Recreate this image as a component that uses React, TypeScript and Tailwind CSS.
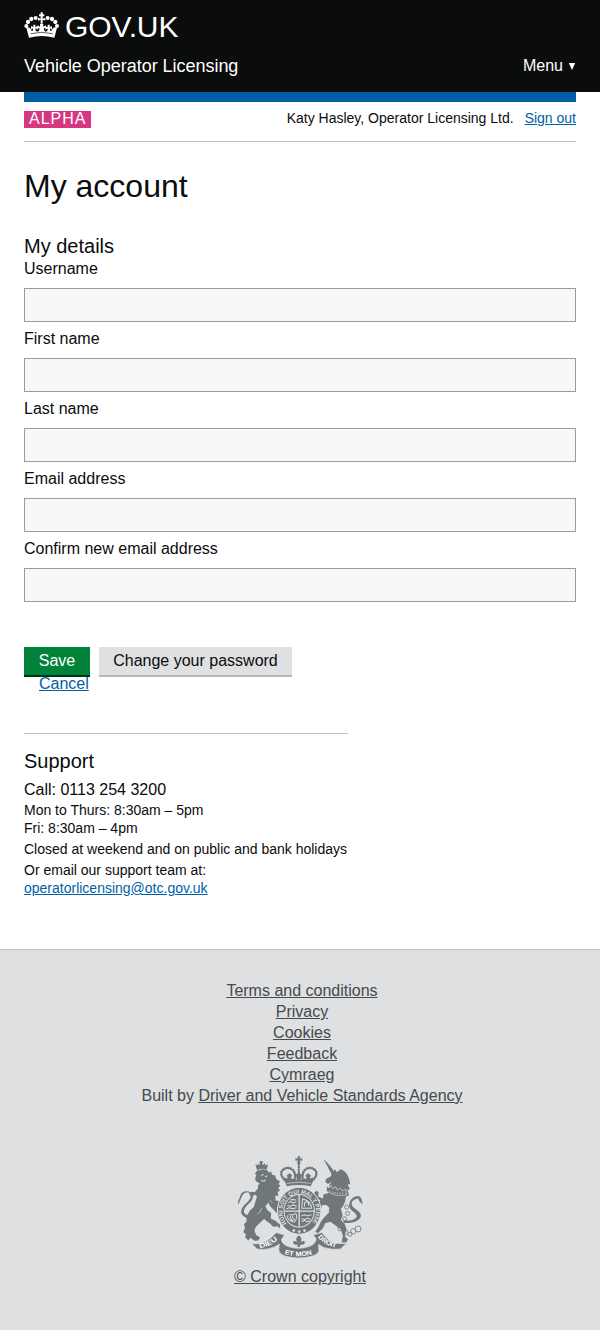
import React from "react";

const fields = ["Username", "First name", "Last name", "Email address", "Confirm new email address"];
const footerLinks = ["Terms and conditions", "Privacy", "Cookies", "Feedback", "Cymraeg"];

function Crown() {
  return (
    <svg className="block h-[27px] w-[36px]" viewBox="0 0 108 81" fill="#fff">
      <path d="M15 80 L7 50 Q17 46 22 59 L27 59 L27 52 L21 56 L21 45 L28 48 L28 41 L34 41 L34 48 L41 45 L41 56 L34 52 L35 60 L42 62 Q48 58 46 50 L40 54 L40 43 L48 47 L48 39 L58 39 L58 47 L66 43 L66 54 L60 50 Q58 58 64 62 L70 60 L71 52 L64 56 L64 45 L71 48 L71 41 L77 41 L77 48 L84 45 L84 56 L78 52 L78 59 L83 59 Q88 46 99 50 L91 80 Q53 70 15 80Z" />
      <path d="M50 38 L50 26 L42 29 L42 20 L50 23 L50 16 L45 16 L45 10 L50 10 L50 4 L56 4 L56 10 L61 10 L61 16 L56 16 L56 23 L64 20 L64 29 L56 26 L56 38Z" />
      <circle cx="35" cy="21" r="6" /><circle cx="22" cy="24" r="6.5" /><circle cx="12" cy="33" r="6.5" /><circle cx="7" cy="45" r="6" />
      <circle cx="71" cy="21" r="6" /><circle cx="84" cy="24" r="6.5" /><circle cx="94" cy="33" r="6.5" /><circle cx="99" cy="45" r="6" />
      <path d="M20 68 Q53 60 86 68" stroke="#0b0c0c" strokeWidth="2" fill="none" />
    </svg>
  );
}

function Crest() {
  return (
    <svg className="block h-[102px] w-[125px]" viewBox="25 16 374 309" preserveAspectRatio="none" fill="#6f777b">
      <defs>
        <path id="motto" d="M171 220 A50 54 0 1 1 245 220" />
        <path id="dieu" d="M90 294 Q124 292 150 263" />
        <path id="droit" d="M264 262 Q288 292 326 294" />
        <path id="mon" d="M164 313 Q206 326 250 313" />
      </defs>
      <path d="M203 17 L211 17 L210 24 L217 22 L217 31 L210 29 L212 38 Q207 44 202 38 L204 29 L197 31 L197 22 L204 24Z" />
      <g fill="none" stroke="#6f777b" strokeLinecap="round">
        <path d="M168 92 Q147 72 158 59 Q170 48 183 54 Q200 63 195 90 M246 92 Q267 72 256 59 Q244 48 231 54 Q214 63 219 90" strokeWidth="3" />
        <path d="M168 92 Q147 72 158 59 Q170 48 183 54 Q200 63 195 90 M246 92 Q267 72 256 59 Q244 48 231 54 Q214 63 219 90" strokeDasharray="0.1 8" strokeWidth="8" />
        <path d="M207 43 L207 88" strokeDasharray="0.1 7" strokeWidth="7" />
      </g>
      <path d="M165 92 L163 80 L174 85 L171 74 L180 68 L187 74 L183 85 L192 84 L202 88 L198 73 L207 66 L216 73 L212 88 L222 84 L231 85 L227 74 L234 68 L243 74 L240 85 L251 80 L249 92 L243 108 Q207 100 171 108Z" />
      <path d="M171 99 Q207 91 243 99" stroke="#dee0e2" fill="none" strokeWidth="2" />

      <path d="M77 41 L86 45 L84 38 L91 43 L91 36 L87 35 L92 31 L96 31 L101 35 L97 38 L99 43 L106 37 L106 45 L115 41 L111 57 Q96 52 82 59Z" />
      <path d="M80 62 Q95 53 111 58 L118 66 L125 63 L126 72 L137 76 L139 86 L151 93 L146 101 L152 107 L145 112 L151 121 L143 124 L146 137 L137 136 L137 151 L152 153 L160 147 L161 156 L153 166 L145 166 L141 176 L148 183 L141 189 L124 171 L115 158 L107 168 L113 180 L124 189 L123 205 L137 212 L151 224 L151 236 L143 229 L130 230 L122 222 L115 217 L103 207 L94 215 L80 229 L74 240 L79 255 L91 263 L86 272 L74 273 L62 264 L56 272 L46 262 L49 254 L41 246 L46 234 L43 223 L51 214 L50 200 L61 180 L72 171 L78 151 L82 139 L76 133 L69 138 L59 134 L61 127 L68 124 L75 126 L85 114 L85 103 L92 101 L78 92 L76 83 L80 76 L76 69Z" />
      <path d="M94 76 L102 71 M94 89 Q103 96 108 88 M106 79 L113 76" fill="none" stroke="#dee0e2" strokeWidth="3" />
      <path d="M96 174 Q91 187 83 193 M128 158 L120 150" fill="none" stroke="#dee0e2" strokeWidth="2" />
      <path d="M58 205 Q34 200 34 184 Q35 171 53 156 Q72 137 55 126 Q41 124 34 145 L26 164 L25 154 L29 145 Q34 122 49 123 Q68 123 70 139 Q69 151 54 164 Q40 178 43 187 Q47 196 63 196Z" />

      <path d="M280 25 Q301 43 317 70 L306 74 Q295 49 280 25Z" />
      <path d="M307 70 L315 56 L321 65 L332 56 Q350 62 357 84 L361 101 L353 103 L360 116 L353 119 L357 136 L348 139 L345 155 L339 168 L333 176 L338 195 L333 210 L344 221 L350 239 L344 259 L354 268 L349 278 L335 278 L339 257 L333 239 L318 227 L301 215 L286 220 L279 235 L265 249 L256 246 L265 232 L273 215 L281 204 L297 187 L298 173 L289 164 L276 165 L272 181 L263 174 L263 158 L272 151 L261 143 L252 128 L260 121 L266 126 L265 139 L279 145 L281 132 L294 129 L302 118 L298 104 L306 94 L294 101 L286 94 L289 85 L301 79Z" />
      <path d="M291 107 L298 112 L303 105 L309 115 L317 109 L322 119 L332 113 L337 122 L348 116 L349 134 Q315 140 289 122Z" stroke="#dee0e2" strokeWidth="2" />
      <path d="M298 122 Q324 132 345 127" stroke="#dee0e2" strokeWidth="3" strokeDasharray="3 5" fill="none" />
      <path d="M339 211 Q366 214 379 202 Q384 195 371 186 Q353 174 359 157 Q366 137 385 137 Q396 139 398 163 Q387 155 384 145 Q365 149 365 161 Q365 171 382 180 Q400 194 388 207 Q374 221 343 219Z" />
      <g fill="none" stroke="#6f777b" strokeWidth="2.5">
        <circle cx="350" cy="171" r="6" /><circle cx="353" cy="190" r="6" /><circle cx="344" cy="206" r="6" />
        <circle cx="331" cy="236" r="7" /><circle cx="346" cy="248" r="8" /><circle cx="360" cy="253" r="6" /><circle cx="370" cy="244" r="8" /><circle cx="384" cy="237" r="9" />
      </g>

      <ellipse cx="208" cy="182" rx="65" ry="71" stroke="#dee0e2" strokeWidth="3" />
      <ellipse cx="208" cy="182" rx="47" ry="51" fill="#dee0e2" />
      <ellipse cx="208" cy="182" rx="44" ry="48" />
      <path d="M163 183 H253 M208 134 V230" stroke="#dee0e2" strokeWidth="4" />
      <g fill="none" stroke="#dee0e2" strokeWidth="3">
        <path d="M175 158 l8 -4 l7 4 l9 -3 M173 166 l10 2 l8 -4 l10 4 M170 176 l9 -3 l9 3 l12 -3 M181 149 l9 -1 l10 2" />
        <path d="M216 215 l8 -4 l7 4 l9 -3 M215 206 l10 2 l8 -4 l10 4 M215 197 l9 -3 l9 3 l12 -3" />
        <path d="M218 146 Q243 151 245 174 L216 174 Z M224 169 V158 L233 153 L237 166" />
        <path d="M174 195 Q170 212 194 216 Q205 201 198 190 Q187 197 177 192 M181 196 Q181 208 191 213 M188 196 Q187 204 195 209" />
      </g>
      <text fill="#dee0e2" fontFamily="Liberation Sans" fontWeight="700" fontSize="18"><textPath href="#motto" textLength="238" lengthAdjust="spacingAndGlyphs">HONI SOIT QUI MAL Y PENSE</textPath></text>
      <g fill="#dee0e2"><circle cx="192" cy="242" r="4" /><circle cx="208" cy="245" r="4" /><circle cx="224" cy="242" r="4" /></g>

      <path d="M66 281 Q108 289 139 248 L164 255 L155 270 Q157 284 175 290 Q207 302 241 289 Q257 283 259 267 L250 255 L276 248 Q302 289 350 280 L331 298 Q290 302 266 284 L267 302 Q264 315 244 320 Q207 330 169 320 Q146 313 147 297 L149 283 Q119 303 82 298Z" stroke="#dee0e2" strokeWidth="2" />
      <path d="M163 257 Q207 270 251 257 L258 270 Q250 288 207 294 Q164 288 157 270Z" fill="#dee0e2" />
      <path d="M207 256 Q221 267 211 278 Q220 269 226 277 Q223 287 211 284 L211 292 L203 292 L203 284 Q192 287 189 277 Q194 269 203 278 Q193 267 207 256Z" />
      <g fill="#fff" fontFamily="Liberation Sans" fontWeight="700" fontSize="20">
        <text><textPath href="#dieu" textLength="60" lengthAdjust="spacingAndGlyphs">DIEU</textPath></text>
        <text><textPath href="#mon" textLength="84" lengthAdjust="spacingAndGlyphs">ET MON</textPath></text>
        <text><textPath href="#droit" textLength="64" lengthAdjust="spacingAndGlyphs">DROIT</textPath></text>
      </g>
    </svg>
  );
}

export default function App() {
  return (
    <div className="flex min-h-[1330px] flex-col bg-white font-['Liberation_Sans',Arial,sans-serif] text-base leading-5 text-[#0b0c0c]">
      <header className="h-[92px] bg-[#0b0c0c] px-6 pt-[11px] text-white">
        <a className="flex h-[30px] items-start gap-[5px]" href="#">
          <Crown />
          <span className="pt-px text-[30px] leading-[30px] tracking-[-0.1px]">GOV.UK</span>
        </a>
        <div className="mt-[15px] flex items-center justify-between">
          <span className="text-lg leading-5 tracking-[-0.03px]">Vehicle Operator Licensing</span>
          <button className="flex items-center gap-[5px] leading-5">Menu
            <svg className="h-[7px] w-2" viewBox="0 0 8 7" fill="#fff"><path d="M.8 0H7.2L4 7Z" /></svg>
          </button>
        </div>
      </header>
      <div className="mx-6 h-[10px] bg-[#005ea5]" />
      <div className="mx-6 flex h-10 items-start justify-between border-b border-[#bfc1c3] pt-[9px]">
        <strong className="h-[17px] w-[67px] bg-[#d53880] pl-[5px] font-normal leading-4 tracking-[1px] text-white">ALPHA</strong>
        <p className="-mt-px text-sm leading-4">Katy Hasley, Operator Licensing Ltd.<a className="ml-[11px] text-[#005ea5] underline" href="#">Sign out</a></p>
      </div>
      <main className="px-6">
        <h1 className="mt-[27px] text-[32px] leading-[35px]">My account</h1>
        <h2 className="mt-[29px] text-xl leading-[26px]">My details</h2>
        <form>
          {fields.map((label) => (
            <label key={label} className="block h-[70px]">
              <span className="block h-[29px] leading-5">{label}</span>
              <input className="block h-[34px] w-full border border-[#999b9c] bg-[#f8f8f8]" />
            </label>
          ))}
          <div className="mt-[38px] flex gap-[9px]">
            <button className="h-[30px] w-[66px] border-b-2 border-[#003618] bg-[#00823b] text-white">Save</button>
            <button className="h-[30px] w-[193px] border-b-2 border-[#b5b7b9] bg-[#dee0e2]">Change your password</button>
          </div>
          <a className="-mt-[3px] ml-[15px] block w-fit text-[#005ea5] underline" href="#">Cancel</a>
        </form>
        <section className="mt-[39px] w-[324px] border-t border-[#bfc1c3] pt-[15px]">
          <h2 className="text-xl leading-6">Support</h2>
          <p className="mt-[7px]">Call: 0113 254 3200</p>
          <div className="mt-px whitespace-nowrap text-sm leading-[18px]">
            <p>Mon to Thurs: 8:30am – 5pm<br />Fri: 8:30am – 4pm</p>
            <p className="mt-[3px]">Closed at weekend and on public and bank holidays</p>
            <p className="mt-[3px]">Or email our support team at:<br /><a className="text-[#005ea5] underline" href="#">operatorlicensing@otc.gov.uk</a></p>
          </div>
        </section>
      </main>
      <footer className="mt-[52px] flex flex-1 flex-col items-center border-t border-[#bfc1c3] bg-[#dee0e2] pt-[30px] text-[#454a4c]">
        <ul className="ml-1 text-center leading-[21px]">
          {footerLinks.map((link) => <li key={link}><a className="underline" href="#">{link}</a></li>)}
          <li>Built by <a className="underline" href="#">Driver and Vehicle Standards Agency</a></li>
        </ul>
        <a className="mt-[50px] flex flex-col items-center gap-[9px] underline" href="#">
          <Crest />
          <span>© Crown copyright</span>
        </a>
      </footer>
    </div>
  );
}
